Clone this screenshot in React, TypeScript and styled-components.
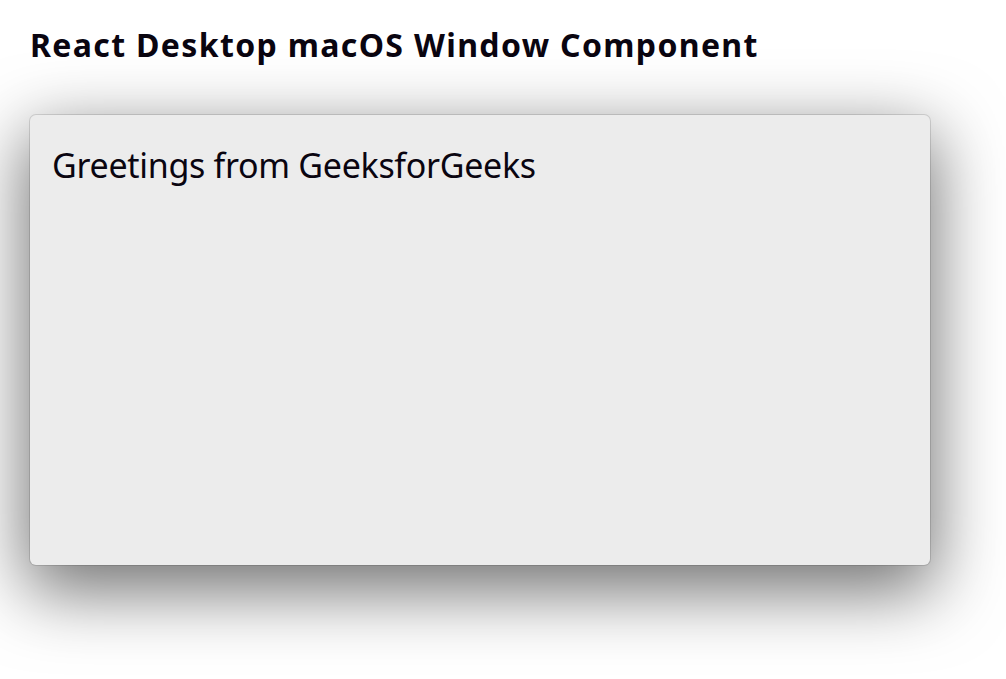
import React from "react";
import styled, { createGlobalStyle } from "styled-components";

const Global = createGlobalStyle`
  html, body { margin: 0; padding: 0; background: #ffffff; }
  body { font-family: "Noto Sans", "Open Sans", sans-serif; color: #000; }
`;

const Page = styled.div`
  box-sizing: border-box;
  min-height: 100vh;
  padding: 25px 30px 40px 30px;
  display: flex;
  flex-direction: column;
  align-items: flex-start;
`;

const Title = styled.h1`
  margin: 0;
  font-family: "Noto Sans", sans-serif;
  font-weight: 700;
  font-size: 32px;
  line-height: 40px;
  letter-spacing: 1.35px;
  color: #0a0510;
  white-space: nowrap;
`;

const Window = styled.div`
  margin-top: 50px;
  width: 900px;
  height: 450px;
  box-sizing: border-box;
  background: #ececec;
  border-radius: 6px;
  box-shadow: 0 0 0 1px rgba(0, 0, 0, 0.12), 0 22px 70px 4px rgba(0, 0, 0, 0.56);
  padding: 28px 22px;
`;

const Greeting = styled.p`
  margin: 0;
  font-family: "Noto Sans", sans-serif;
  font-size: 34px;
  line-height: 44px;
  font-weight: 400;
  letter-spacing: -0.3px;
  color: #0a0510;
`;

export default function App() {
  return (
    <>
      <Global />
      <Page>
        <Title>React Desktop macOS Window Component</Title>
        <Window>
          <Greeting>Greetings from GeeksforGeeks</Greeting>
        </Window>
      </Page>
    </>
  );
}
